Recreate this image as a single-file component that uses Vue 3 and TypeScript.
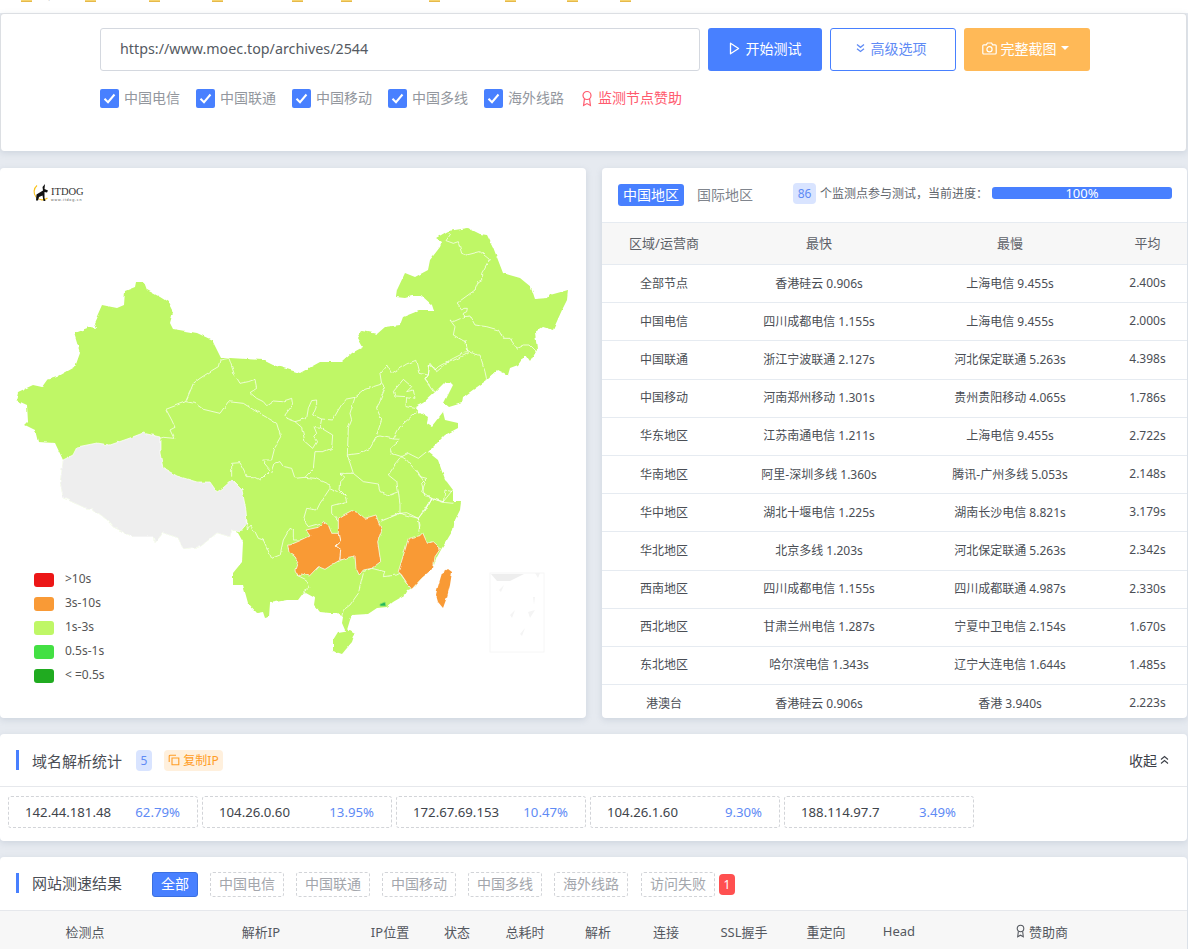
<script setup lang="ts">
const bookmarks = [
  { w: 64, t: '常用' }, { w: 64, t: '博客' }, { w: 63, t: '' }, { w: 80, t: '' }, { w: 49, t: '' },
  { w: 88, t: '技术文档' }, { w: 76, t: '资源站' }, { w: 62, t: '' }, { w: 53, t: '工具' }, { w: 60, t: '其他' },
]
const lines = ['中国电信', '中国联通', '中国移动', '中国多线', '海外线路']
const rows = [
  ['全部节点', '香港硅云 0.906s', '上海电信 9.455s', '2.400s'],
  ['中国电信', '四川成都电信 1.155s', '上海电信 9.455s', '2.000s'],
  ['中国联通', '浙江宁波联通 2.127s', '河北保定联通 5.263s', '4.398s'],
  ['中国移动', '河南郑州移动 1.301s', '贵州贵阳移动 4.065s', '1.786s'],
  ['华东地区', '江苏南通电信 1.211s', '上海电信 9.455s', '2.722s'],
  ['华南地区', '阿里-深圳多线 1.360s', '腾讯-广州多线 5.053s', '2.148s'],
  ['华中地区', '湖北十堰电信 1.225s', '湖南长沙电信 8.821s', '3.179s'],
  ['华北地区', '北京多线 1.203s', '河北保定联通 5.263s', '2.342s'],
  ['西南地区', '四川成都电信 1.155s', '四川成都联通 4.987s', '2.330s'],
  ['西北地区', '甘肃兰州电信 1.287s', '宁夏中卫电信 2.154s', '1.670s'],
  ['东北地区', '哈尔滨电信 1.343s', '辽宁大连电信 1.644s', '1.485s'],
  ['港澳台', '香港硅云 0.906s', '香港 3.940s', '2.223s'],
]
const ips = [
  ['142.44.181.48', '62.79%'], ['104.26.0.60', '13.95%'], ['172.67.69.153', '10.47%'],
  ['104.26.1.60', '9.30%'], ['188.114.97.7', '3.49%'],
]
const legend = [
  { c: '#ec1616', t: '>10s' }, { c: '#f99a36', t: '3s-10s' }, { c: '#bff766', t: '1s-3s' },
  { c: '#43e043', t: '0.5s-1s' }, { c: '#20ab20', t: '< =0.5s' },
]
const cols = ['检测点', '解析IP', 'IP位置', '状态', '总耗时', '解析', '连接', 'SSL握手', '重定向', 'Head']

const land = 'M16 400L18 392L33 385L42 387L47 380L57 377L75 367L80 353L74 333L90 327L96 328L94 323L102 305L117 308L124 305L125 291L135 287L136 282L144 282L147 290L160 297L168 302L173 312L170 323L173 329L197 333L212 340L221 358L230 358L263 360L273 365L290 370L300 373L320 362L342 362L352 353L363 347L358 338L362 331L377 334L385 327L400 325L403 317L418 311L434 311L432 305L422 296L412 296L405 298L396 297L397 290L405 273L415 277L428 270L430 260L440 247L442 242L436 238L448 231L468 228L480 234L487 235L493 247L503 273L520 278L531 287L535 299L548 298L550 295L568 290L567 300L562 310L553 330L543 327L535 332L537 350L530 362L525 355L518 365L510 368L508 375L498 370L487 380L477 387L463 397L462 403L449 407L444 403L453 385L450 382L445 382L434 393L423 403L415 407L420 413L428 418L427 423L432 426L443 412L445 420L458 423L458 428L445 435L433 447L428 452L438 460L445 480L447 482L453 490L453 502L461 502L460 510L455 520L453 530L447 540L442 548L437 557L433 568L423 577L413 588L408 590L405 595L393 602L387 607L377 608L368 614L352 615L350 620L347 630L345 630L342 623L343 617L337 613L330 613L320 612L314 605L315 598L304 592L298 600L287 600L270 603L269 617L265 618L263 612L257 613L248 603L243 585L233 585L233 573L242 562L243 542L238 533L232 530L230 537L217 533L200 547L183 549L178 538L163 533L155 543L153 537L133 537L113 527L107 520L93 509L85 508L63 498L60 482L63 460L55 443L38 442L35 430L25 425L28 422L27 405Z'
const tibet = 'M240 532L232 530L230 537L217 533L200 547L183 549L178 538L163 533L155 543L153 537L133 537L113 527L107 520L93 509L85 508L63 498L60 482L63 460L73 455L77 447L97 443L110 445L130 438L143 433L160 437L160 453L163 468L177 476L197 482L210 482L217 492L223 488L232 480L242 490L246 510L247 523Z'
const hainan = 'M333 640L338 632L350 630L355 633L352 642L342 654L333 651Z'
const guizhou = 'M-7 225L0 225L35 210L60 198L48 180L85 172L100 155L115 165L125 190L145 190L150 215L135 228L152 240L150 270L125 285L105 298L85 290L58 318L35 312L25 318L15 300L23 275L15 260L-3 247Z'
const hunan = 'M145 145L160 135L185 122L205 128L225 145L258 135L265 155L275 180L263 215L272 275L245 295L220 300L208 315L198 295L195 258L175 262L150 270L152 240L135 228L150 215L145 190Z'
const fujian = 'M325 305L345 240L355 205L390 197L398 188L412 220L430 215L452 235L435 260L430 295L395 325L365 358L355 345L335 315Z'
const taiwan = 'M436 595L437 590L442 573L448 569L452 572L450 585L447 597L443 608L438 602Z'
const neLines = [
  'M475 65L482 72L468 92L490 100L505 95L515 130L530 135L570 125L598 148L575 190L575 210L565 215L555 240L500 280L515 300L522 295L532 295L530 305L520 310L520 322',
  'M520 320L540 318L555 345L590 350L625 360L640 385L660 385L680 415L700 405L720 405L740 425',
  'M520 322L490 335L480 330L495 350L490 375L525 395L530 420L560 435L570 435L585 485L590 508',
  'M530 425L490 445L445 470L435 480L420 460L415 495L405 510L430 545',
]
const provLines = [
  'M207 55L180 60L175 80L155 92L120 115L100 130L90 155L77 185L18 208L35 240L45 262L30 270L42 295L10 292L0 295',
  'M207 55L222 100L240 130L265 125L285 118L290 145L270 158L290 175L310 185L320 197L340 183L365 185L395 175L398 195L375 225L378 235L405 245L440 235L445 205L455 182L470 180L470 195L458 225L485 237L518 240L535 210L555 178L585 172L615 148L665 132L675 145',
  'M665 132L660 100L680 75L695 100L740 72L770 60L780 100L805 105L808 75L825 85L830 95L860 70L905 50L925 40L915 0',
  'M795 118L805 105M795 118L820 150L828 160',
  'M700 155L730 118L755 140L740 155L760 150L765 175L740 170L738 200L765 205M700 155L705 168L740 170',
  'M585 172L570 220L575 240L565 265L562 345L600 340L630 325L650 290L660 288L700 297L720 298L690 325L695 340L725 350',
  'M675 145L650 205L665 240L650 285M700 297L720 260L770 215',
  'M725 350L745 340L775 355L800 335M562 345L580 400L610 425L655 432L660 455L690 465L715 455L710 425L685 405L705 375L725 350',
  'M725 350L740 360L770 395L780 410L800 415L785 430L795 470L815 475L850 487L855 450L878 455M850 487L880 490',
  'M715 455L720 490L720 520L740 518L775 535L795 510L815 475',
  'M720 520L660 545M775 535L780 555L775 580',
  'M580 400L540 400L555 412L542 425L540 450L555 465L560 485L515 497L515 520L535 545',
  'M435 412L465 415L510 435L510 445L555 465M485 237L480 262L518 285L515 325L490 335L465 335L460 385L435 412',
  'M405 245L425 262L435 305L458 325L470 305L460 290L470 280L462 260L480 262',
  'M77 185L105 190L130 208L180 220L205 185L250 190L285 212L325 235L350 250L362 290L345 320L335 360L305 360L330 390L300 420L280 410L262 410L240 368L215 370L215 410',
  'M335 400L345 370L360 365L370 380L395 385L405 415L435 412',
  'M258 540L262 570L270 555L285 575L295 595L310 600L335 655L360 645L370 600L390 565L400 570L400 600L430 600',
  'M510 445L480 490L470 510L440 505L430 540L445 560L480 550',
]
const southLines = [
  'M220 310L205 370L180 405L160 420L155 440M220 305L245 295L285 305L280 320L320 315L330 310L355 345M20 315L50 330L60 355L40 365',
  'M270 150L328 130L385 145L390 185M385 145L425 85L460 95L488 60M425 85L400 130M380 0L405 40L395 65L425 85',
]
</script>

<template>
  <div class="page">
    <div class="bookmarks">
      <div v-for="(b, i) in bookmarks" :key="i" class="bm" :style="{ width: b.w + 'px' }">
        <i class="folder"></i><span>{{ b.t }}</span>
      </div>
    </div>

    <section class="card search">
      <div class="search-row">
        <div class="url">https://www.moec.top/archives/2544</div>
        <button class="btn primary">
          <svg width="11" height="13" viewBox="0 0 11 13"><path d="M1.5 1.2L9.6 6.5L1.5 11.8Z" fill="none" stroke="currentColor" stroke-width="1.3" stroke-linejoin="round"/></svg>
          开始测试
        </button>
        <button class="btn outline">
          <svg width="9" height="10" viewBox="0 0 9 10"><path d="M1 1.5L4.5 4.3L8 1.5M1 5.7L4.5 8.5L8 5.7" fill="none" stroke="currentColor" stroke-width="1.3"/></svg>
          高级选项
        </button>
        <button class="btn warn">
          <svg width="15" height="13" viewBox="0 0 15 13"><path d="M1.8 2.8H4.4L5.4 1H9.6L10.6 2.8H13.2A1 1 0 0 1 14.2 3.8V11A1 1 0 0 1 13.2 12H1.8A1 1 0 0 1 .8 11V3.8A1 1 0 0 1 1.8 2.8Z" fill="none" stroke="currentColor" stroke-width="1.2"/><circle cx="7.5" cy="7.2" r="2.6" fill="none" stroke="currentColor" stroke-width="1.2"/></svg>
          完整截图
          <i class="caret"></i>
        </button>
      </div>
      <div class="check-row">
        <label v-for="l in lines" :key="l" class="check">
          <span class="box"><svg width="13" height="11" viewBox="0 0 13 11"><path d="M1.5 5.8L5 9.2L11.5 1.5" fill="none" stroke="#fff" stroke-width="2"/></svg></span>
          <span class="lift">{{ l }}</span>
        </label>
        <span class="sponsor">
          <svg width="10" height="17" viewBox="0 0 10 17"><circle cx="5" cy="5.5" r="4" fill="none" stroke="currentColor" stroke-width="1.2"/><path d="M2.4 9L1.6 15.5L5 13.6L8.4 15.5L7.6 9" fill="none" stroke="currentColor" stroke-width="1.2"/></svg>
          <span class="lift">监测节点赞助</span>
        </span>
      </div>
    </section>

    <div class="main-row">
      <section class="card map-card">
        <svg class="map" width="586" height="550" viewBox="0 168 586 550">
          <defs>
            <filter id="rough" filterUnits="userSpaceOnUse" x="0" y="168" width="586" height="550">
              <feTurbulence type="fractalNoise" baseFrequency=".14" numOctaves="2" seed="4" result="n"/>
              <feDisplacementMap in="SourceGraphic" in2="n" scale="3" xChannelSelector="R" yChannelSelector="G"/>
            </filter>
          </defs>
          <path d="M37 185.5A8 8 0 1 0 47.5 198" fill="none" stroke="#f9c21a" stroke-width="1.1"/>
          <path d="M45 184L44.5 189L48 190.500L47 192.500L44.500 192L44.500 198L45.500 201H43.500L42.500 195.500L39 197L38 200.500L36 200.500L36.500 194.500L43 190.500L42.500 187Z" fill="#111"/>
          <text x="51" y="195" class="logo-a">ITDOG</text>
          <text x="51" y="200.500" class="logo-b">www.itdog.cn</text>

          <g filter="url(#rough)">
            <path :d="land" fill="#bff766"/>
            <path :d="hainan" fill="#bff766"/>
            <path :d="tibet" fill="#eeeeee" stroke="#fff" stroke-width=".7"/>
            <g transform="translate(160 340) scale(.33333)" fill="none" stroke="#fff" stroke-width="2.1" stroke-linejoin="round">
              <path v-for="(d, i) in provLines" :key="i" :d="d"/>
            </g>
            <g transform="translate(290 210) scale(.33333)" fill="none" stroke="#fff" stroke-width="2.1" stroke-linejoin="round">
              <path v-for="(d, i) in neLines" :key="i" :d="d"/>
            </g>
            <g transform="translate(290 470) scale(.33333)" fill="none" stroke="#fff" stroke-width="2.1" stroke-linejoin="round">
              <path v-for="(d, i) in southLines" :key="i" :d="d"/>
              <g fill="#f99a36">
                <path :d="guizhou"/>
                <path :d="hunan"/>
                <path :d="fujian"/>
              </g>
            </g>
            <path :d="taiwan" fill="#f99a36"/>
          </g>
          <path d="M380 604L385 602L386 606L380 606Z" fill="#22b85a" stroke="#8ee36a" stroke-width=".8"/>
          <g fill="#f4f4f4">
            <rect x="490" y="573" width="54" height="79" fill="none" stroke="#f6f6f6"/>
            <path d="M491 574H524L510 581L497 581Z" fill="#eee"/>
            <path d="M535 573H540L538 578ZM499 590L504 585L501 592ZM533 597L535 597L534 605ZM510 615L515 610L512 618ZM528 612L535 610L530 618ZM520 634L525 628L522 636Z"/>
          </g>
        </svg>
        <div class="legend">
          <div v-for="l in legend" :key="l.t" class="legend-item">
            <i :style="{ background: l.c }"></i><span class="lift">{{ l.t }}</span>
          </div>
        </div>
      </section>

      <section class="card stat-card">
        <div class="stat-head">
          <span class="tab active">中国地区</span>
          <span class="tab">国际地区</span>
          <span class="num up">86</span>
          <span class="progress-label up">个监测点参与测试，当前进度：</span>
          <div class="progress up">100%</div>
        </div>
        <div class="trow thead">
          <span>区域/运营商</span><span>最快</span><span>最慢</span><span>平均</span>
        </div>
        <div v-for="r in rows" :key="r[0]" class="trow">
          <span v-for="(c, i) in r" :key="i">{{ c }}</span>
        </div>
      </section>
    </div>

    <section class="card dns">
      <header class="sec-head">
        <i class="accent"></i>
        <h2>域名解析统计</h2>
        <span class="num small">5</span>
        <span class="copy">
          <svg width="12" height="12" viewBox="0 0 12 12"><path d="M8 1.200H2.200A1 1 0 0 0 1.200 2.200V8M4 4H10.800V10.800H4Z" fill="none" stroke="currentColor" stroke-width="1.1"/></svg>
          复制IP
        </span>
        <span class="fold">收起
          <svg width="9" height="10" viewBox="0 0 9 10"><path d="M1 4.5L4.5 1.5L8 4.5M1 8.5L4.5 5.5L8 8.5" fill="none" stroke="currentColor" stroke-width="1.1"/></svg>
        </span>
      </header>
      <div class="ip-row">
        <div v-for="ip in ips" :key="ip[0]" class="ip">
          <span>{{ ip[0] }}</span><b>{{ ip[1] }}</b>
        </div>
      </div>
    </section>

    <section class="card result">
      <header class="sec-head res">
        <i class="accent"></i>
        <h2>网站测速结果</h2>
        <div class="filters">
          <span class="filter on">全部</span>
          <span v-for="l in lines" :key="l" class="filter">{{ l }}</span>
          <span class="filter last">访问失败</span>
          <span class="fail">1</span>
        </div>
      </header>
      <div class="res-head">
        <span v-for="c in cols" :key="c">{{ c }}</span>
        <span class="res-sp">
          <svg width="9" height="14" viewBox="0 0 10 17"><circle cx="5" cy="5.5" r="4" fill="none" stroke="currentColor" stroke-width="1.3"/><path d="M2.4 9L1.6 15.5L5 13.6L8.4 15.5L7.6 9" fill="none" stroke="currentColor" stroke-width="1.3"/></svg>
          赞助商
        </span>
      </div>
    </section>
  </div>
</template>

<style>
html, body { margin: 0; background: #e6eaf0; overflow: hidden; }
</style>

<style scoped>
.page {
  height: 949px;
  overflow: hidden;
  display: flex;
  flex-direction: column;
  font-family: "Noto Sans", "Noto Sans CJK SC", sans-serif;
  color: #3c4048;
  background: #e6eaf0;
}
.bookmarks {
  flex: none;
  height: 13px;
  background: #fff;
  overflow: hidden;
  display: flex;
  padding-left: 21px;
}
.bm {
  flex: none;
  display: flex;
  gap: 11px;
  height: 2px;
  align-items: flex-end;
  font-size: 12px;
  color: #444;
  white-space: nowrap;
}
.folder {
  flex: none;
  width: 11px;
  height: 2px;
  background: #f5d36e;
  border-bottom: 1px solid #e6b94a;
  box-sizing: border-box;
}
.bm span { line-height: 14px; height: 2px; overflow: hidden; display: flex; align-items: flex-end; }
.card {
  background: #fff;
  border-radius: 4px;
  box-shadow: 0 2px 6px rgba(120, 135, 160, .22);
}
.search {
  flex: none;
  height: 138px;
  box-sizing: border-box;
  margin-right: 1px;
  border: 1px solid #dcdfe3;
  border-bottom: 0;
  padding: 14px 0 0 99px;
}
.search-row { display: flex; gap: 8px; }
.url {
  width: 600px;
  height: 43px;
  box-sizing: border-box;
  border: 1px solid #d4d8df;
  border-radius: 3px;
  padding-left: 19px;
  font-size: 14.3px;
  line-height: 39px;
  color: #555a62;
}
.btn {
  height: 43px;
  border-radius: 3px;
  border: 1px solid transparent;
  font: inherit;
  font-size: 14px;
  display: flex;
  align-items: center;
  justify-content: center;
  padding: 0 0 3px;
}
.primary { width: 114px; gap: 6px; background: #4880ff; color: #fff; }
.outline { width: 126px; gap: 6px; background: #fff; border-color: #4880ff; color: #5f8bf5; padding-right: 4px; }
.warn { width: 126px; gap: 4px; background: #ffb957; color: #fff; padding-right: 4px; }
.caret {
  margin-left: 0;
  border-left: 4.5px solid transparent;
  border-right: 4.5px solid transparent;
  border-top: 4.5px solid #fff;
}
.lift { margin-bottom: 4px; }
.check-row { display: flex; align-items: center; margin-top: 18px; height: 19px; }
.check {
  display: flex;
  align-items: center;
  gap: 5px;
  width: 96px;
  font-size: 14px;
  color: #93979e;
  white-space: nowrap;
}
.box {
  width: 19px;
  height: 19px;
  flex: none;
  border-radius: 2px;
  background: #4880ff;
  display: flex;
  align-items: center;
  justify-content: center;
}
.sponsor { display: flex; align-items: center; gap: 6px; font-size: 14px; color: #ff5a6e; margin-left: 2px; }
.main-row { flex: none; display: flex; gap: 16px; margin: 17px 1px 0 0; height: 550px; }
.map-card { width: 586px; position: relative; overflow: hidden; }
.map { display: block; }
.logo-a { font-family: "Liberation Serif", serif; font-size: 10.5px; fill: #333; }
.logo-b { font-family: "Liberation Sans", sans-serif; font-size: 3.7px; fill: #555; letter-spacing: .8px; }
.legend { position: absolute; left: 34px; top: 405px; display: flex; flex-direction: column; gap: 10px; }
.legend-item { display: flex; align-items: center; gap: 11px; height: 14px; font-size: 12px; color: #555; }
.legend-item i { width: 20px; height: 14px; border-radius: 3px; }
.stat-card { flex: 1; min-width: 0; overflow: hidden; }
.stat-head { height: 54px; display: flex; align-items: center; padding-left: 16px; box-sizing: border-box; }
.tab { font-size: 14px; height: 22px; line-height: 21px; width: 66px; text-align: center; border-radius: 3px; color: #80858d; }
.tab.active { background: #4880ff; color: #fff; }
.tab + .tab { margin-left: 13px; width: 56px; }
.up { margin-bottom: 4px; }
.num {
  width: 23px;
  height: 21px;
  line-height: 21px;
  margin-left: 40px;
  border-radius: 4px;
  background: #d9e4ff;
  color: #5f8bf5;
  font-size: 12px;
  text-align: center;
}
.num.small { width: 16px; margin: 0 0 0 14px; }
.progress-label { font-size: 12px; color: #62666d; margin-left: 4px; width: 172px; white-space: nowrap; }
.progress {
  width: 180px;
  height: 12px;
  line-height: 12px;
  border-radius: 3px;
  background: #4880ff;
  color: #fff;
  font-size: 13px;
  text-align: center;
}
.trow {
  display: grid;
  grid-template-columns: 124px 186px 196px 1fr;
  height: 38.2px;
  box-sizing: border-box;
  border-top: 1px solid #e6ebf1;
  padding-bottom: 2px;
  align-items: center;
  text-align: center;
  font-size: 12px;
  color: #4a4e55;
  white-space: nowrap;
}
.thead { height: 42px; background: #f7f7f7; font-size: 13px; color: #5d6168; }
.dns { flex: none; height: 107px; margin: 16px 1px 0 0; }
.sec-head {
  height: 53px;
  box-sizing: border-box;
  border-bottom: 1px solid #e6e8ec;
  display: flex;
  align-items: center;
  padding-left: 16px;
}
.accent { width: 3px; height: 20px; background: #4880ff; flex: none; }
h2 { margin: 0 0 0 13px; font-size: 15px; font-weight: 400; color: #4a4e55; width: 90px; white-space: nowrap; }
.copy {
  margin-left: 12px;
  width: 59px;
  height: 21px;
  box-sizing: border-box;
  border-radius: 4px;
  background: #fff0dd;
  color: #ff9d26;
  font-size: 12px;
  display: flex;
  align-items: center;
  justify-content: center;
  gap: 3px;
}
.fold { margin-left: auto; margin-right: 18px; font-size: 14px; color: #3c4048; display: flex; align-items: center; gap: 3px; }
.ip-row { display: flex; gap: 4px; padding: 9px 8px 0; }
.ip {
  width: 190px;
  height: 32px;
  box-sizing: border-box;
  border: 1px dashed #d2d4d8;
  border-radius: 3px;
  padding: 0 17px 0 16px;
  display: flex;
  align-items: center;
  justify-content: space-between;
  font-size: 13.2px;
  color: #40444b;
}
.ip b { font-weight: 400; color: #5f8bf5; }
.result { flex: none; height: 200px; margin: 16px 1px 0 0; }
.sec-head.res { height: 54px; border-bottom: 1px solid #e6e8ec; padding-bottom: 2px; }
.filters { display: flex; align-items: center; gap: 12px; margin: 3px 0 0 30px; }
.filter {
  width: 74px;
  height: 25px;
  line-height: 21.5px;
  box-sizing: border-box;
  border: 1px dashed #d2d4d8;
  border-radius: 3px;
  text-align: center;
  font-size: 14px;
  color: #a3a6ac;
}
.filter.on { width: 46px; background: #4880ff; border: 1px solid #3a6fe0; color: #fff; }
.filter.last { margin-left: 1px; }
.fail {
  margin-left: -8px;
  width: 16px;
  height: 21px;
  line-height: 21px;
  border-radius: 4px;
  background: #ff5050;
  color: #fff;
  font-size: 12px;
  text-align: center;
}
.res-head {
  height: 38px;
  box-sizing: border-box;
  padding-top: 2px;
  background: #f7f7f7;
  display: grid;
  grid-template-columns: 170px 182px 76px 58px 78px 68px 68px 88px 76px 70px 216px;
  align-items: center;
  text-align: center;
  font-size: 13px;
  color: #54585f;
}
.res-sp { display: flex; align-items: center; justify-content: center; gap: 4px; }
</style>
